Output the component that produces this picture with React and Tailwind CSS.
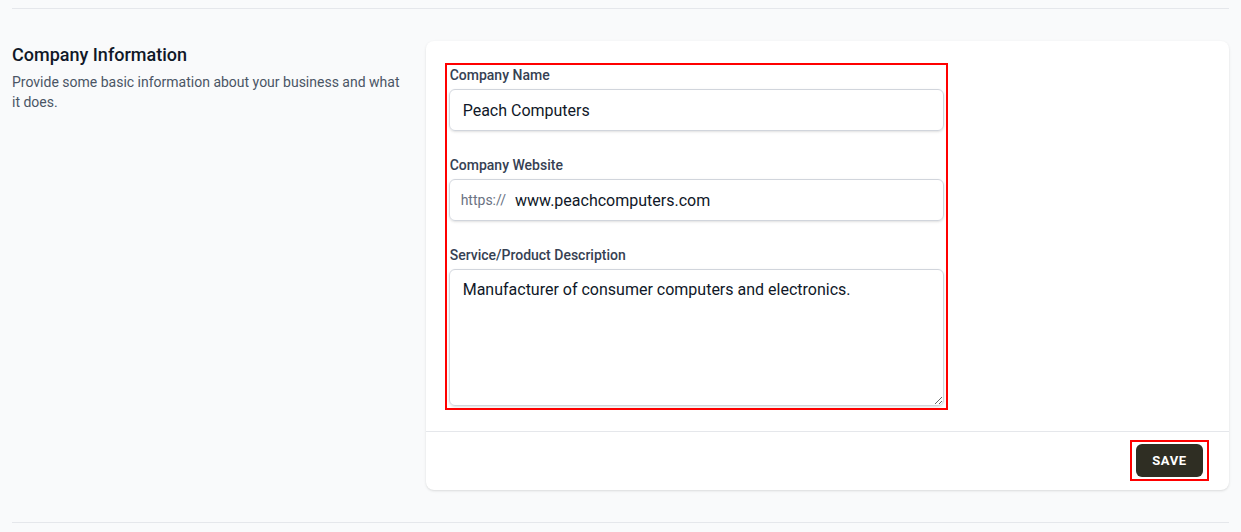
export default function App() {
  return (
    <div
      className="min-h-[532px] bg-[#f9fafb] px-3 pt-2"
      style={{ fontFamily: "Roboto, 'Liberation Sans', sans-serif" }}
    >
      <div className="border-t border-gray-200" />

      <div className="grid grid-cols-3 gap-6 pt-8">
        <div>
          <h3 className="text-lg font-medium leading-7 text-gray-900">
            Company Information
          </h3>
          <p className="mt-[3px] text-sm leading-5 text-gray-600">
            Provide some basic information about your business and what it
            does.
          </p>
        </div>

        <div className="col-span-2 overflow-hidden rounded-lg bg-white shadow">
          <div className="pl-[19px] pt-[22px] pb-[21px]">
            <div className="w-[503px] border-2 border-[#ff0000] px-[2px] pb-[2px] space-y-6">
              <div>
                <label className="block pl-px text-sm font-medium leading-5 text-gray-700">
                  Company Name
                </label>
                <input
                  type="text"
                  readOnly
                  defaultValue="Peach Computers"
                  className="mt-1 block h-[42px] w-full rounded-md border border-gray-300 px-[13px] text-base text-gray-900 shadow-sm outline-none"
                />
              </div>

              <div>
                <label className="block pl-px text-sm font-medium leading-5 text-gray-700">
                  Company Website
                </label>
                <div className="mt-1 flex h-[42px] items-center rounded-md border border-gray-300 shadow-sm">
                  <span className="pl-[11px] text-sm text-gray-500">
                    https://
                  </span>
                  <input
                    type="text"
                    readOnly
                    defaultValue="www.peachcomputers.com"
                    className="h-full flex-1 bg-transparent pl-[9px] text-base text-gray-900 outline-none"
                  />
                </div>
              </div>

              <div>
                <label className="block pl-px text-sm font-medium leading-5 text-gray-700">
                  Service/Product Description
                </label>
                <textarea
                  readOnly
                  defaultValue="Manufacturer of consumer computers and electronics."
                  className="mt-1 block h-[137px] w-full rounded-md border border-gray-300 px-[13px] py-2 text-base leading-6 text-gray-900 shadow-sm outline-none"
                />
              </div>
            </div>
          </div>

          <div className="flex justify-end border-t border-gray-200 pr-5 pt-2 pb-[9px]">
            <div className="border-2 border-[#ff0000] px-[4px] py-[2px]">
              <button className="h-[33px] w-[67px] rounded-md bg-[#2f2e23] text-[13px] font-bold tracking-wider text-white">
                SAVE
              </button>
            </div>
          </div>
        </div>
      </div>

      <div className="mt-8 border-t border-gray-200" />
    </div>
  );
}
